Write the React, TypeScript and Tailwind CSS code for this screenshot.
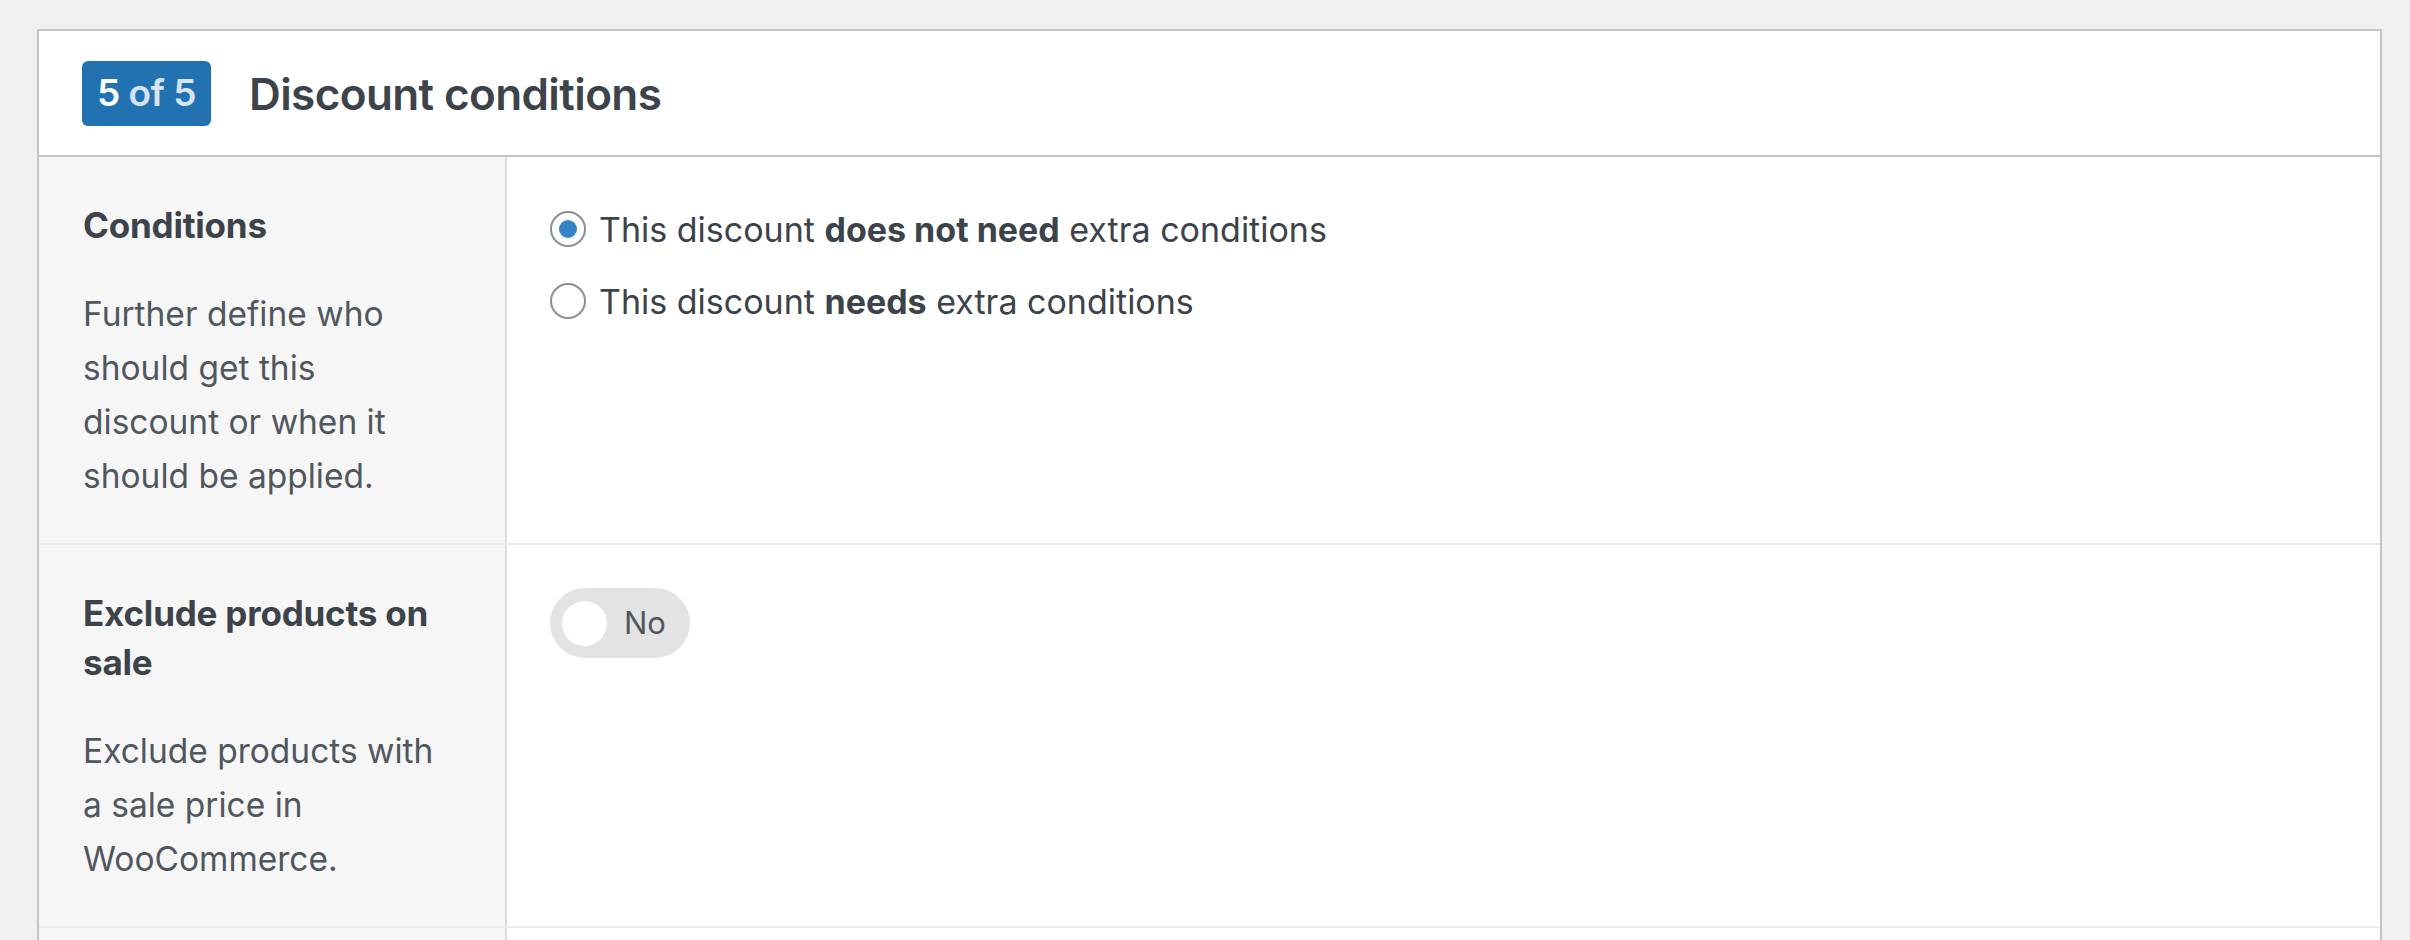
export default function App() {
  return (
    <div
      className="h-[940px] overflow-hidden bg-[#f0f0f0] pt-[29px] pl-[37px] pr-[28px] text-[#3c434a]"
      style={{ fontFamily: 'Inter, "Noto Sans", sans-serif' }}
    >
      <div className="border-2 border-[#c3c4c7] bg-white">
        {/* header */}
        <div className="flex h-[126px] items-center gap-[38px] border-b-2 border-[#c3c4c7] pl-[43px]">
          <div className="flex h-[65px] w-[129px] items-center justify-center rounded-[6px] bg-[#2271b1] text-[37px] font-semibold tracking-[-0.5px]">
            <span className="text-white">5</span>
            <span className="text-[#d6e4f1]">&nbsp;of 5</span>
          </div>
          <h2 className="pt-[2px] text-[44px] font-semibold tracking-[-0.6px] text-[#3c434a]">Discount conditions</h2>
        </div>

        {/* row: conditions */}
        <div className="flex border-b-2 border-[#ebebeb]">
          <div className="w-[468px] shrink-0 border-r-2 border-[#dcdcde] bg-[#f6f6f6] pt-[44px] pb-[40px] pl-[44px] pr-[50px]">
            <div className="text-[35px] font-bold leading-[49px] tracking-[-0.2px]">Conditions</div>
            <p className="mt-[37px] text-[33.5px] leading-[54px] text-[#50575e]">
              Further define who should get this discount or when it should be applied.
            </p>
          </div>
          <div className="flex flex-col gap-[24px] pt-[48px] pl-[43px]">
            <label className="flex h-[48px] items-center text-[34px]">
              <span className="mr-[13px] flex h-[36px] w-[36px] items-center justify-center rounded-full border-2 border-[#8c8f94] bg-white">
                <span className="h-[18px] w-[18px] rounded-full bg-[#3582c4]" />
              </span>
              <span>
                This discount <b className="font-bold">does not need</b> extra conditions
              </span>
            </label>
            <label className="flex h-[48px] items-center text-[34px]">
              <span className="mr-[13px] h-[36px] w-[36px] rounded-full border-2 border-[#8c8f94] bg-white" />
              <span>
                This discount <b className="font-bold">needs</b> extra conditions
              </span>
            </label>
          </div>
        </div>

        {/* row: exclude on sale */}
        <div className="flex border-b-2 border-[#ebebeb]">
          <div className="w-[468px] shrink-0 border-r-2 border-[#dcdcde] bg-[#f6f6f6] pt-[44px] pb-[40px] pl-[44px] pr-[50px]">
            <div className="text-[35px] font-bold leading-[49px] tracking-[-0.2px]">Exclude products on sale</div>
            <p className="mt-[37px] text-[33.5px] leading-[54px] text-[#50575e]">
              Exclude products with a sale price in WooCommerce.
            </p>
          </div>
          <div className="pt-[43px] pl-[43px]">
            <div className="flex h-[70px] w-[140px] items-center rounded-full bg-[#e3e3e3] pl-[12px]">
              <span className="h-[45px] w-[45px] rounded-full bg-white" />
              <span className="ml-[17px] text-[31px] text-[#50575e]">No</span>
            </div>
          </div>
        </div>

        {/* next row (cut off) */}
        <div className="flex h-[200px]">
          <div className="w-[468px] shrink-0 border-r-2 border-[#dcdcde] bg-[#f6f6f6]" />
          <div className="flex-1" />
        </div>
      </div>
    </div>
  );
}
